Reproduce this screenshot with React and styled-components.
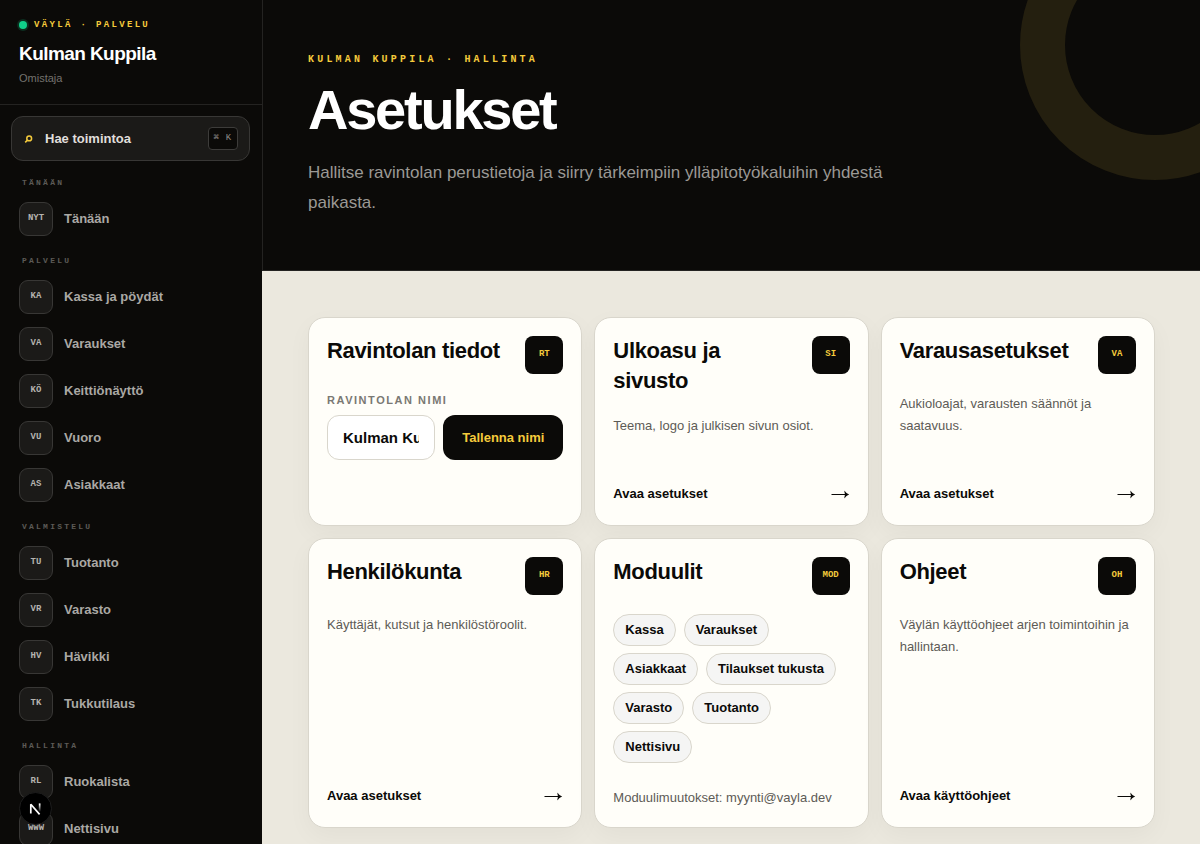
import React, { useState } from 'react';
import styled, { createGlobalStyle } from 'styled-components';

const sans = '"Liberation Sans", Arial, sans-serif';
const mono = '"Courier New", "Liberation Mono", monospace';

const colors = {
    ink: '#0b0a08',
    yellow: '#f5cb3c',
    paper: '#fffef9',
    sand: '#ebe8de',
    line: '#d9d6cc',
    text: '#5d5b56'
};

const GlobalStyle = createGlobalStyle`
    *, *::before, *::after {
      box-sizing: border-box;
    }
    body {
      margin: 0;
      background: ${colors.sand};
      color: ${colors.ink};
      font-family: ${sans};
      font-size: 13px;
    }
    button, input {
      font-family: inherit;
    }
`;

const Layout = styled.div`
    display: grid;
    grid-template-columns: 262px minmax(0, 1fr);
    min-height: 100vh;
`;

const Sidebar = styled.aside`
    position: sticky;
    top: 0;
    height: 100vh;
    overflow-y: auto;
    scrollbar-width: none;
    background: ${colors.ink};
`;

const Brand = styled.div`
    padding: 18px 19px;
    border-bottom: 1px solid #242321;
`;

const BrandLine = styled.div`
    display: flex;
    align-items: center;
    gap: 7px;
    color: ${colors.yellow};
    font: bold 9px/14px ${mono};
    letter-spacing: 0.26em;
    text-transform: uppercase;
`;

const StatusDot = styled.span`
    width: 8px;
    height: 8px;
    border-radius: 50%;
    background: #10d08a;
    box-shadow: 0 0 0 2px rgba(16, 208, 138, 0.18);
`;

const BrandName = styled.div`
    margin-top: 10px;
    color: #fff;
    font-size: 19px;
    font-weight: bold;
    line-height: 24px;
    letter-spacing: -0.03em;
`;

const BrandRole = styled.div`
    margin-top: 4px;
    color: #74726e;
    font-size: 11px;
    line-height: 16px;
`;

const SearchButton = styled.button`
    display: flex;
    align-items: center;
    width: calc(100% - 23px);
    height: 45px;
    margin: 11px 12px 0 11px;
    padding: 0 11px 0 12px;
    border: 1px solid #383735;
    border-radius: 12px;
    background: #1b1a18;
    color: #e0dfdc;
    font-size: 13px;
    font-weight: bold;
    text-align: left;
    cursor: pointer;
    svg {
      flex: none;
      width: 10px;
      height: 10px;
      margin-right: 11px;
    }
`;

const Shortcut = styled.kbd`
    margin-left: auto;
    padding: 0 5px;
    border: 1px solid #3d3c3a;
    border-radius: 4px;
    background: ${colors.ink};
    color: #8d8b87;
    font: 9px/21px ${mono};
    letter-spacing: 0.08em;
    white-space: nowrap;
`;

const Nav = styled.nav`
    display: flex;
    flex-direction: column;
    gap: 14px;
    padding: 16px 11px;
`;

const NavGroup = styled.div`
    display: flex;
    flex-direction: column;
    gap: 2px;
`;

const NavLabel = styled.div`
    padding-left: 11px;
    margin-bottom: 5px;
    color: #5c5a56;
    font: bold 8px/12px ${mono};
    letter-spacing: 0.28em;
    text-transform: uppercase;
`;

const NavItem = styled.a`
    display: flex;
    align-items: center;
    gap: 11px;
    height: 45px;
    padding: 0 8px;
    color: #aaa8a4;
    font-size: 13px;
    font-weight: bold;
    text-decoration: none;
`;

const NavCode = styled.span`
    display: flex;
    justify-content: center;
    width: 34px;
    height: 34px;
    border: 1px solid #383735;
    border-radius: 9px;
    background: #1b1a18;
    color: #b5b3af;
    font: bold 9px/30px ${mono};
`;

const DevBadge = styled.button`
    position: fixed;
    left: 19px;
    bottom: 19px;
    width: 33px;
    height: 33px;
    padding: 0;
    border: 1px solid #1d1d1d;
    border-radius: 50%;
    background: #000;
    svg {
      display: block;
      width: 31px;
      height: 31px;
    }
`;

const Hero = styled.header`
    position: relative;
    overflow: hidden;
    padding: 52px 45px;
    border-left: 1px solid #242321;
    border-bottom: 1px solid #242321;
    background: ${colors.ink};
    &::after {
      content: '';
      position: absolute;
      top: -90px;
      right: -90px;
      width: 270px;
      height: 270px;
      border: 45px solid #241f0f;
      border-radius: 50%;
    }
`;

const Eyebrow = styled.div`
    color: ${colors.yellow};
    font: bold 10px/16px ${mono};
    letter-spacing: 0.32em;
    text-transform: uppercase;
`;

const PageTitle = styled.h1`
    margin: 14px 0 20px;
    color: #fff;
    font-size: 56px;
    line-height: 56px;
    letter-spacing: -0.04em;
`;

const Lead = styled.p`
    max-width: 630px;
    margin: 0;
    color: #9b9995;
    font-size: 17px;
    line-height: 30px;
`;

const Cards = styled.section`
    display: grid;
    grid-template-columns: repeat(3, minmax(0, 1fr));
    gap: 12px;
    padding: 46px 45px 46px 46px;
`;

const CardBox = styled.article`
    display: flex;
    flex-direction: column;
    min-height: 209px;
    padding: 18px;
    border: 1px solid ${colors.line};
    border-radius: 17px;
    background: ${colors.paper};
    box-shadow: 0 8px 24px rgba(11, 10, 8, 0.04);
`;

const CardHead = styled.div`
    display: flex;
    align-items: flex-start;
    justify-content: space-between;
    gap: 12px;
    margin-bottom: 19px;
`;

const CardTitle = styled.h2`
    margin: 0;
    font-size: 22px;
    line-height: 30px;
    letter-spacing: -0.015em;
`;

const CardCode = styled.span`
    flex: none;
    width: 38px;
    height: 38px;
    border-radius: 8px;
    background: ${colors.ink};
    color: ${colors.yellow};
    font: bold 9px/36px ${mono};
    text-align: center;
`;

const CardText = styled.p`
    margin: 0;
    color: ${colors.text};
    font-size: 13px;
    line-height: 22px;
`;

const CardLink = styled.a`
    display: flex;
    align-items: center;
    justify-content: space-between;
    margin-top: auto;
    color: ${colors.ink};
    font-size: 13px;
    font-weight: bold;
    line-height: 27px;
    text-decoration: none;
    svg {
      width: 19px;
      height: 11px;
    }
`;

const FieldLabel = styled.label`
    margin-bottom: 8px;
    color: #7a7873;
    font-size: 11px;
    font-weight: bold;
    line-height: 14px;
    letter-spacing: 0.14em;
    text-transform: uppercase;
`;

const FieldRow = styled.div`
    display: flex;
    gap: 8px;
`;

const TextInput = styled.input`
    flex: 1;
    min-width: 0;
    height: 45px;
    padding: 0 15px;
    border: 1px solid ${colors.line};
    border-radius: 12px;
    background: #fff;
    color: ${colors.ink};
    font-size: 15px;
    font-weight: bold;
`;

const SaveButton = styled.button`
    height: 45px;
    padding: 0 19px;
    border: 0;
    border-radius: 12px;
    background: ${colors.ink};
    color: ${colors.yellow};
    font-size: 13px;
    font-weight: bold;
    white-space: nowrap;
    cursor: pointer;
`;

const Chips = styled.div`
    display: flex;
    flex-wrap: wrap;
    gap: 7px 8px;
    margin-bottom: 24px;
`;

const Chip = styled.span`
    padding: 0 11px;
    border: 1px solid ${colors.line};
    border-radius: 16px;
    background: #f5f5f4;
    font-size: 13px;
    font-weight: bold;
    line-height: 30px;
`;

const navGroups = [
    { label: 'Tänään', items: [['NYT', 'Tänään']] },
    {
        label: 'Palvelu',
        items: [
            ['KA', 'Kassa ja pöydät'],
            ['VA', 'Varaukset'],
            ['KÖ', 'Keittiönäyttö'],
            ['VU', 'Vuoro'],
            ['AS', 'Asiakkaat']
        ]
    },
    {
        label: 'Valmistelu',
        items: [
            ['TU', 'Tuotanto'],
            ['VR', 'Varasto'],
            ['HV', 'Hävikki'],
            ['TK', 'Tukkutilaus']
        ]
    },
    {
        label: 'Hallinta',
        items: [
            ['RL', 'Ruokalista'],
            ['WWW', 'Nettisivu']
        ]
    }
];

const modules = ['Kassa', 'Varaukset', 'Asiakkaat', 'Tilaukset tukusta', 'Varasto', 'Tuotanto', 'Nettisivu'];

const SearchIcon = () => (
    <svg viewBox="0 0 10 10" fill="none" stroke={colors.yellow} strokeWidth="1.5" aria-hidden="true">
        <circle cx="5.2" cy="4.4" r="2.4" />
        <path d="M3.5 6.1 1.2 8.4" />
    </svg>
);

const Arrow = () => (
    <svg viewBox="0 0 19 11" aria-hidden="true">
        <path d="M0.5 6.5h15" stroke={colors.ink} strokeWidth="1" />
        <path d="M13.8 2.8c.9 1.7 2.3 2.9 4.4 3.7-2.1.8-3.5 2-4.4 3.7l-.4-.2c.1-1.4.3-2.5.7-3.5-.4-1-.6-2.1-.7-3.5z" fill={colors.ink} />
    </svg>
);

const Card = ({ title, code, text, link, children }) => (
    <CardBox>
        <CardHead>
            <CardTitle>{title}</CardTitle>
            <CardCode>{code}</CardCode>
        </CardHead>
        {text ? <CardText>{text}</CardText> : null}
        {children}
        {link ? <CardLink href="#">{link}<Arrow /></CardLink> : null}
    </CardBox>
);

const App = () => {
    const [name, setName] = useState('Kulman Kuppila');

    return <>
        <GlobalStyle />
        <Layout>
            <Sidebar>
                <Brand>
                    <BrandLine><StatusDot />Väylä · Palvelu</BrandLine>
                    <BrandName>Kulman Kuppila</BrandName>
                    <BrandRole>Omistaja</BrandRole>
                </Brand>
                <SearchButton type="button">
                    <SearchIcon />
                    Hae toimintoa
                    <Shortcut>⌘ K</Shortcut>
                </SearchButton>
                <Nav>
                    {navGroups.map(group => (
                        <NavGroup key={group.label}>
                            <NavLabel>{group.label}</NavLabel>
                            {group.items.map(([code, label]) => (
                                <NavItem href="#" key={code}>
                                    <NavCode>{code}</NavCode>
                                    {label}
                                </NavItem>
                            ))}
                        </NavGroup>
                    ))}
                </Nav>
            </Sidebar>
            <main>
                <Hero>
                    <Eyebrow>Kulman Kuppila · Hallinta</Eyebrow>
                    <PageTitle>Asetukset</PageTitle>
                    <Lead>Hallitse ravintolan perustietoja ja siirry tärkeimpiin ylläpitotyökaluihin yhdestä paikasta.</Lead>
                </Hero>
                <Cards>
                    <Card title="Ravintolan tiedot" code="RT">
                        <FieldLabel htmlFor="restaurant-name">Ravintolan nimi</FieldLabel>
                        <FieldRow>
                            <TextInput
                                id="restaurant-name"
                                value={name}
                                onChange={e => setName(e.target.value)}
                            />
                            <SaveButton type="button">Tallenna nimi</SaveButton>
                        </FieldRow>
                    </Card>
                    <Card
                        title="Ulkoasu ja sivusto"
                        code="SI"
                        text="Teema, logo ja julkisen sivun osiot."
                        link="Avaa asetukset"
                    />
                    <Card
                        title="Varausasetukset"
                        code="VA"
                        text="Aukioloajat, varausten säännöt ja saatavuus."
                        link="Avaa asetukset"
                    />
                    <Card
                        title="Henkilökunta"
                        code="HR"
                        text="Käyttäjät, kutsut ja henkilöstöroolit."
                        link="Avaa asetukset"
                    />
                    <Card title="Moduulit" code="MOD">
                        <Chips>
                            {modules.map(item => <Chip key={item}>{item}</Chip>)}
                        </Chips>
                        <CardText>Moduulimuutokset: myynti@vayla.dev</CardText>
                    </Card>
                    <Card
                        title="Ohjeet"
                        code="OH"
                        text="Väylän käyttöohjeet arjen toimintoihin ja hallintaan."
                        link="Avaa käyttöohjeet"
                    />
                </Cards>
            </main>
        </Layout>
        <DevBadge type="button" aria-label="Next.js">
            <svg viewBox="0 0 31 31" fill="none" aria-hidden="true">
                <defs>
                    <linearGradient id="stem" x1="0" y1="11" x2="0" y2="19" gradientUnits="userSpaceOnUse">
                        <stop stopColor="#fff" />
                        <stop offset="1" stopColor="#fff" stopOpacity="0" />
                    </linearGradient>
                </defs>
                <path d="M10.8 20.5V11.2L19.6 21.4" stroke="#fff" strokeWidth="1.7" strokeLinejoin="bevel" />
                <path d="M18.8 10.4h1.7v8.4h-1.7z" fill="url(#stem)" />
            </svg>
        </DevBadge>
    </>;
};

export default App;
